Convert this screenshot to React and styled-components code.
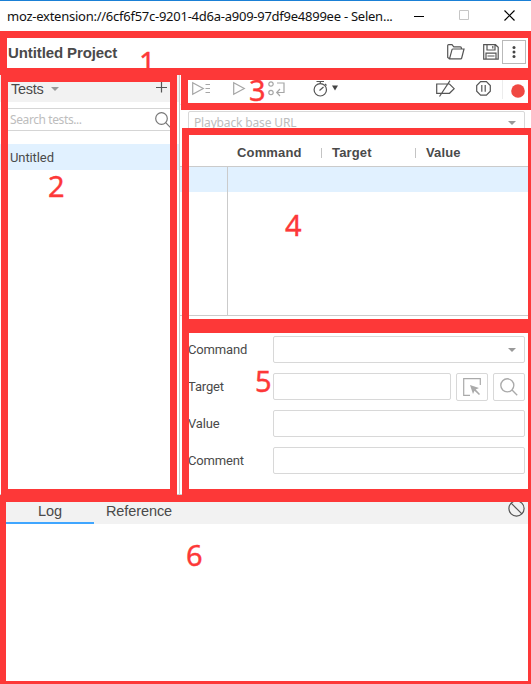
import React from "react";
import styled, { createGlobalStyle } from "styled-components";

const RED = "#fd3838";
const LINE = "#cbcbcb";

const Global = createGlobalStyle`
  * { box-sizing: border-box; }
  html, body { margin: 0; padding: 0; overflow: hidden; background: #fff; }
  body { font-family: "Liberation Sans", Arial, sans-serif; color: #4a4a4a; }
  svg { display: block; flex: none; }
`;

const Window = styled.div`
  position: relative;
  width: 531px;
  height: 684px;
  display: flex;
  flex-direction: column;
  overflow: hidden;
  background: #fff;
`;

const TitleBar = styled.div`
  height: 31px;
  flex: none;
  border-top: 1px solid #1a80d6;
  display: flex;
  align-items: center;
  padding-left: 7px;
  color: #111;
`;

const WindowTitle = styled.div`
  width: 407px;
  font: 13px/28px "Noto Sans", sans-serif;
  letter-spacing: -0.25px;
  white-space: nowrap;
`;

const WindowButtons = styled.div`
  display: flex;
  align-items: center;
  padding-bottom: 2px;
  gap: 35px;
`;

const ProjectBar = styled.div`
  height: 44px;
  flex: none;
  display: flex;
  align-items: center;
  padding: 0 5px 2px 8px;
`;

const ProjectName = styled.div`
  flex: 1;
  font-size: 15px;
  letter-spacing: -0.1px;
  font-weight: bold;
`;

const MenuButton = styled.div`
  width: 24px;
  height: 24px;
  margin-left: 3px;
  border: 1px solid #b9b9b9;
  display: flex;
  align-items: center;
  justify-content: center;
`;

const Main = styled.div`
  height: 420px;
  flex: none;
  display: flex;
  border-bottom: 1px solid ${LINE};
`;

const Sidebar = styled.div`
  width: 180px;
  flex: none;
  border-right: 1px solid ${LINE};
`;

const TestsHeader = styled.div`
  height: 27px;
  background: #f2f2f2;
  display: flex;
  align-items: center;
  padding: 0 12px 0 11px;
  font-size: 14.5px;
`;

const TestsLabel = styled.div`
  width: 40px;
  letter-spacing: -0.3px;
`;

const Spacer = styled.div`
  flex: 1;
`;

const SearchBox = styled.div`
  height: 23px;
  margin: 6px 8px 13px 8px;
  border-top: 1px solid #d5d5d5;
  border-bottom: 1px solid #d5d5d5;
  display: flex;
  align-items: center;
  justify-content: space-between;
  padding-left: 2px;
  font: 12px/20px "Noto Sans", sans-serif;
  letter-spacing: -0.4px;
  color: #bdbdbd;
`;

const TestItem = styled.div`
  height: 26px;
  padding-left: 10px;
  background: #e1f1ff;
  font: 13px/27px Roboto, sans-serif;
  letter-spacing: -0.1px;
`;

const Editor = styled.div`
  flex: 1;
  min-width: 0;
  display: flex;
  flex-direction: column;
`;

const Toolbar = styled.div`
  height: 30px;
  flex: none;
  display: flex;
  align-items: flex-start;
  padding: 5px 6px 0 12px;
  border-bottom: 1px solid #e6e6e6;
`;

const ToolGroup = styled.div`
  display: flex;
  gap: ${(p) => p.$gap}px;
  padding-right: ${(p) => p.$end || 0}px;
`;

const RecordButton = styled.div`
  height: 19px;
  display: flex;
  align-items: center;
  padding: 2px 0 0 8px;
  border-left: 1px solid #ececec;
`;

const UrlRow = styled.div`
  padding: 6px 6px 0 8px;
  height: 30px;
  flex: none;
`;

const Select = styled.div`
  height: ${(p) => p.$height}px;
  flex: 1;
  border: 1px solid #d8d8d8;
  border-radius: 2px;
  display: flex;
  align-items: center;
  justify-content: space-between;
  padding: 0 8px 0 5px;
  font: 12px/20px "Noto Sans", sans-serif;
  letter-spacing: -0.15px;
  color: #bdbdbd;
`;

const Table = styled.div`
  height: 181px;
  flex: none;
  border-bottom: 1px solid ${LINE};
`;

const TableHead = styled.div`
  height: 32px;
  border-bottom: 1px solid ${LINE};
  display: grid;
  grid-template-columns: 47px 94px 94px 1fr;
  align-items: center;
  padding-top: 4px;
`;

const HeadCell = styled.div`
  padding-left: ${(p) => (p.$divided ? 10 : 9)}px;
  font-size: 13px;
  letter-spacing: 0.15px;
  line-height: 10px;
  font-weight: bold;
  border-left: 1px solid ${(p) => (p.$divided ? "#c4c4c4" : "transparent")};
`;

const TableBody = styled.div`
  height: 148px;
  display: grid;
  grid-template-columns: 48px 1fr;
  grid-template-rows: 25px 1fr;
`;

const Cell = styled.div`
  background: ${(p) => (p.$selected ? "#e1f1ff" : "#fff")};
  border-right: ${(p) => (p.$index ? `1px solid ${LINE}` : "0")};
`;

const Form = styled.div`
  display: flex;
  flex-direction: column;
  gap: 10px;
  padding: 20px 6px 0 8px;
`;

const Field = styled.div`
  height: 27px;
  display: flex;
`;

const FieldLabel = styled.div`
  width: 85px;
  font: 13px/27px Roboto, sans-serif;
  letter-spacing: -0.15px;
`;

const Input = styled.div`
  flex: 1;
  border: 1px solid #d8d8d8;
  border-radius: 2px;
`;

const FieldButton = styled.div`
  width: 32px;
  height: 28px;
  margin-left: 5px;
  border: 1px solid #d8d8d8;
  border-radius: 2px;
  display: flex;
  align-items: center;
  justify-content: center;
`;

const Console = styled.div`
  flex: 1;
`;

const Tabs = styled.div`
  height: 29px;
  background: #f2f2f2;
  display: flex;
  padding: 0 6px 0 6px;
`;

const Tab = styled.div`
  width: ${(p) => p.$width}px;
  text-align: center;
  font-size: 14.5px;
  letter-spacing: -0.1px;
  line-height: 32px;
  height: 29px;
  border-bottom: 2px solid ${(p) => (p.$active ? "#40a6ff" : "transparent")};
`;

const ClearButton = styled.div`
  padding-top: 5px;
`;

const Region = styled.div`
  position: absolute;
  left: ${(p) => p.$x}px;
  top: ${(p) => p.$y}px;
  width: ${(p) => p.$w}px;
  height: ${(p) => p.$h}px;
  border-style: solid;
  border-color: ${RED};
  border-width: ${(p) => p.$border};
`;

const Mark = styled.div`
  position: absolute;
  left: ${(p) => p.$x}px;
  top: ${(p) => p.$y}px;
  font: 29px/30px "Noto Sans", sans-serif;
  -webkit-text-stroke: 0.4px ${RED};
  color: ${RED};
`;

const Caret = ({ color = "#999" }) => (
  <svg width="8" height="4" viewBox="0 0 8 4">
    <path d="M0 0H8L4 4Z" fill={color} />
  </svg>
);

const Icon = ({ w, h, color = "#555", children }) => (
  <svg width={w} height={h} viewBox={`0 0 ${w} ${h}`} fill="none" stroke={color} strokeWidth="1.2">
    {children}
  </svg>
);

const Magnifier = ({ size = 16, color }) => (
  <svg width={size} height={size} viewBox="0 0 16 16" fill="none" stroke={color} strokeWidth="1.2">
    <circle cx="6.5" cy="6.5" r="5.8" />
    <path d="M10.7 10.7L15.3 15.3" />
  </svg>
);

const regions = [
  { x: 0, y: 31, w: 531, h: 44, border: "7px 3px 7px 7px" },
  { x: 1, y: 75, w: 176, h: 421, border: "7px" },
  { x: 181, y: 73, w: 350, h: 37, border: "7px 3px 7px 7px" },
  { x: 182, y: 128, w: 349, h: 198, border: "7px 3px 7px 7px" },
  { x: 182, y: 326, w: 349, h: 170, border: "7px 3px 7px 7px" },
  { x: 0, y: 495, w: 531, h: 189, border: "7px 3px 3px 6px" },
];

const marks = [
  { n: 1, x: 139, y: 47 },
  { n: 2, x: 48, y: 171 },
  { n: 3, x: 249, y: 75 },
  { n: 4, x: 285, y: 210 },
  { n: 5, x: 255, y: 366 },
  { n: 6, x: 186, y: 540 },
];

export default function App() {
  return (
    <Window>
      <Global />
      <TitleBar>
        <WindowTitle>moz-extension://6cf6f57c-9201-4d6a-a909-97df9e4899ee - Selen...</WindowTitle>
        <WindowButtons>
          <Icon w={10} h={11} color="#000"><path d="M0 6.5H10" strokeWidth="1" /></Icon>
          <Icon w={10} h={10} color="#c6c6c6"><path d="M.5 .5H9.5V9.5H.5Z" strokeWidth="1" /></Icon>
          <Icon w={11} h={11} color="#000"><path d="M.5 .5L10.5 10.5M10.5 .5L.5 10.5" /></Icon>
        </WindowButtons>
      </TitleBar>

      <ProjectBar>
        <ProjectName>Untitled Project</ProjectName>
        <ToolGroup $gap={18}>
          <Icon w={18} h={16}>
            <path d="M2.5 14.8L.7 13.5V1.6Q.7.7 1.6.7H5L6.8 2.8H13.4Q14.4 2.8 14.4 4V5M2.5 14.8L5 5.7Q5.2 5 6 5H17L14.7 14Q14.5 14.8 13.7 14.8Z" />
          </Icon>
          <Icon w={16} h={16}>
            <path d="M.7.7H12.5L15.2 3.3V15.2H.7ZM4 .7V6H12V.7M3 15V9.2H13V15M9.8 2V4.5M4.5 12H11.5" />
          </Icon>
        </ToolGroup>
        <MenuButton>
          <svg width="4" height="12" viewBox="0 0 4 12" fill="#444">
            <circle cx="2" cy="1.6" r="1.5" /><circle cx="2" cy="6" r="1.5" /><circle cx="2" cy="10.4" r="1.5" />
          </svg>
        </MenuButton>
      </ProjectBar>

      <Main>
        <Sidebar>
          <TestsHeader>
            <TestsLabel>Tests</TestsLabel>
            <Caret />
            <Spacer />
            <Icon w={11} h={13}><path d="M5.5 0V10.5M0 5.5H11" /></Icon>
          </TestsHeader>
          <SearchBox>
            Search tests...
            <Magnifier color="#777" />
          </SearchBox>
          <TestItem>Untitled</TestItem>
        </Sidebar>

        <Editor>
          <Toolbar>
            <ToolGroup $gap={22}>
              <Icon w={19} h={18} color="#a6a6a6">
                <path d="M.7 2.7V14.3L11.3 8.5ZM13.5 4.5H18M13.5 8.5H18M13.5 12.5H18" />
              </Icon>
              <Icon w={13} h={18} color="#a6a6a6"><path d="M.7 2.7V14.3L11.3 8.5Z" /></Icon>
              <Icon w={18} h={18} color="#a6a6a6">
                <circle cx="3" cy="4" r="2.2" /><circle cx="3" cy="12.5" r="2.2" />
                <path d="M9 3H16V12.5H9M12 9L8.7 12.5L12 16" />
              </Icon>
            </ToolGroup>
            <Spacer />
            <ToolGroup $gap={4} $end={98}>
              <Icon w={15} h={18}>
                <circle cx="7.3" cy="9.8" r="6.2" /><path d="M3.5 1.5H11M7.3 1V3.5M6.5 10.5L10.5 7M12 4L13.5 5.5" />
              </Icon>
              <svg width="6" height="13" viewBox="0 0 6 13"><path d="M0 5.5H6L3 10.5Z" fill="#444" /></svg>
            </ToolGroup>
            <ToolGroup $gap={21} $end={11}>
              <Icon w={19} h={18}>
                <path d="M.7 4H13.5L18.2 8.7L13.5 13.3H.7ZM3.5 16.5L14 .7" />
              </Icon>
              <Icon w={15} h={17}>
                <path d="M4.6 1.6H10.4L14.3 5.5V11.2L10.4 15.1H4.6L.7 11.2V5.5ZM5.8 5V11.7M9.2 5V11.7" />
              </Icon>
            </ToolGroup>
            <RecordButton>
              <svg width="14" height="14" viewBox="0 0 14 14"><circle cx="7" cy="7" r="6.8" fill="#f04842" /></svg>
            </RecordButton>
          </Toolbar>
          <UrlRow>
            <Select $height={23}>Playback base URL<Caret /></Select>
          </UrlRow>
          <Table>
            <TableHead>
              <HeadCell />
              <HeadCell>Command</HeadCell>
              <HeadCell $divided>Target</HeadCell>
              <HeadCell $divided>Value</HeadCell>
            </TableHead>
            <TableBody>
              <Cell $selected $index />
              <Cell $selected />
              <Cell $index />
              <Cell />
            </TableBody>
          </Table>
          <Form>
            <Field>
              <FieldLabel>Command</FieldLabel>
              <Select $height={27}><span /><Caret /></Select>
            </Field>
            <Field>
              <FieldLabel>Target</FieldLabel>
              <Input />
              <FieldButton>
                <Icon w={18} h={18} color="#aaa">
                  <path d="M7 17.3H.7V.7H17.3V7" />
                  <path d="M7 7L16 10L12.7 11.5L17 16L16 17L11.5 12.7L10 16Z" fill="#aaa" stroke="none" />
                </Icon>
              </FieldButton>
              <FieldButton><Magnifier size={18} color="#aaa" /></FieldButton>
            </Field>
            <Field><FieldLabel>Value</FieldLabel><Input /></Field>
            <Field><FieldLabel>Comment</FieldLabel><Input /></Field>
          </Form>
        </Editor>
      </Main>

      <Console>
        <Tabs>
          <Tab $width={88} $active>Log</Tab>
          <Tab $width={90}>Reference</Tab>
          <Spacer />
          <ClearButton>
            <Icon w={17} h={17}><circle cx="8.5" cy="8.5" r="7.6" /><path d="M3.1 3.1L13.9 13.9" /></Icon>
          </ClearButton>
        </Tabs>
      </Console>

      {regions.map((r, i) => (
        <Region key={i} $x={r.x} $y={r.y} $w={r.w} $h={r.h} $border={r.border} />
      ))}
      {marks.map((m) => (
        <Mark key={m.n} $x={m.x} $y={m.y}>{m.n}</Mark>
      ))}
    </Window>
  );
}
